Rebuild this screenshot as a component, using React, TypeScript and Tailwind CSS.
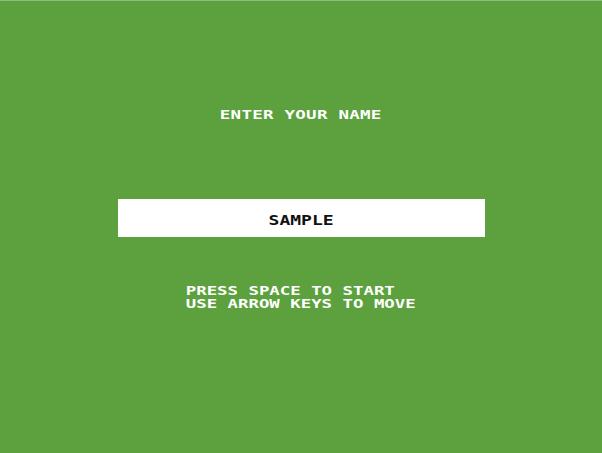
import React from "react";

const mono = { fontFamily: '"DejaVu Sans Mono", "Liberation Mono", monospace' };

export default function App() {
  return (
    <div
      className="w-[602px] h-[453px] bg-[#5ca13e] border-t border-[#8fc078] flex flex-col items-center overflow-hidden"
      style={mono}
    >
      <div className="mt-[107px] h-[14px] text-[14px] leading-[14px] font-bold tracking-[0.2px] text-white scale-x-[1.25] scale-y-[0.88] origin-center">
        ENTER YOUR NAME
      </div>
      <div className="mt-[77px] w-[367px] h-[38px] bg-white flex items-center justify-center">
        <span className="text-[15px] leading-[15px] font-bold tracking-[0px] text-[#111111] scale-x-[1.2] scale-y-[0.95] origin-center inline-block mt-[5px]">
          SAMPLE
        </span>
      </div>
      <div className="mt-[46px] text-[14px] leading-[14.5px] font-bold tracking-[0px] text-white scale-x-[1.24] scale-y-[0.87] origin-center text-left">
        <div>PRESS SPACE TO START</div>
        <div>USE ARROW KEYS TO MOVE</div>
      </div>
    </div>
  );
}
